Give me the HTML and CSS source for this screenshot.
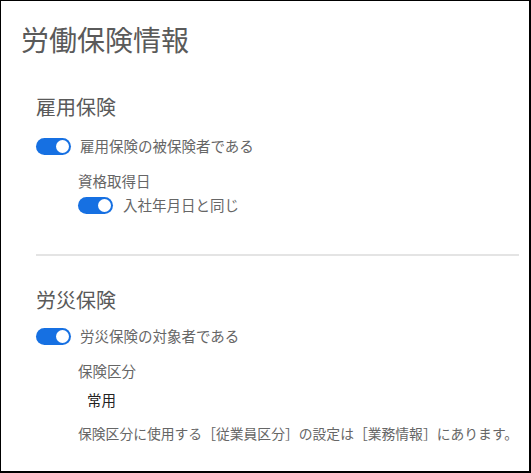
FILE: index.html
```html
<!DOCTYPE html>
<html lang="ja">
<head>
<meta charset="utf-8">
<link rel="stylesheet" href="styles.css">
</head>
<body>
<div class="frame">
  <h1 class="title">労働保険情報</h1>

  <section class="group">
    <h2 class="group-title">雇用保険</h2>
    <div class="toggle-row first">
      <span class="toggle"><span class="knob"></span></span>
      <span class="toggle-label">雇用保険の被保険者である</span>
    </div>
    <div class="sub">
      <div class="field-label">資格取得日</div>
      <div class="toggle-row tight">
        <span class="toggle"><span class="knob"></span></span>
        <span class="toggle-label">入社年月日と同じ</span>
      </div>
    </div>
  </section>

  <div class="divider"></div>

  <section class="group">
    <h2 class="group-title second">労災保険</h2>
    <div class="toggle-row first2">
      <span class="toggle"><span class="knob"></span></span>
      <span class="toggle-label">労災保険の対象者である</span>
    </div>
    <div class="sub">
      <div class="field-label">保険区分</div>
      <div class="value">常用</div>
      <div class="note">保険区分に使用する［従業員区分］の設定は［業務情報］にあります。</div>
    </div>
  </section>
</div>
</body>
</html>
```

FILE: styles.css
```css
html, body {
  margin: 0;
  padding: 0;
  background: #fff;
}

body {
  font-family: "Noto Sans CJK JP", "Noto Sans", sans-serif;
  color: #666;
}

.frame {
  box-sizing: border-box;
  width: 531px;
  height: 473px;
  border: 1px solid #000;
  border-right-width: 2px;
  border-bottom-width: 2px;
  padding-left: 20px;
  overflow: hidden;
}

.title {
  margin: 18px 0 0 0;
  font-size: 28px;
  font-weight: 400;
  line-height: 40px;
  color: #5a5a5a;
}

.group {
  padding-left: 15px;
}

.group-title {
  margin: 34px 0 0 0;
  font-size: 20px;
  font-weight: 400;
  line-height: 28px;
  color: #5a5a5a;
}

.group-title.second {
  margin-top: 30px;
}

.toggle-row {
  display: flex;
  align-items: center;
  gap: 9px;
  height: 24px;
}

.toggle-row.first {
  margin-top: 13px;
}

.toggle-row.first2 {
  margin-top: 10px;
}

.toggle-row.tight {
  margin-top: 1px;
}

.toggle {
  box-sizing: border-box;
  width: 35px;
  height: 17px;
  border-radius: 9px;
  background: #1670e2;
  display: flex;
  justify-content: flex-end;
  align-items: center;
  padding-right: 2px;
}

.knob {
  width: 13px;
  height: 13px;
  border-radius: 50%;
  background: #fff;
}

.toggle-label {
  font-size: 14.5px;
  line-height: 22px;
  color: #666;
}

.sub {
  padding-left: 42px;
}

.field-label {
  margin-top: 12px;
  font-size: 14.5px;
  line-height: 22px;
  color: #666;
}

.tight .toggle-label {
  margin-left: 1px;
}

.value {
  margin-top: 7px;
  padding-left: 9px;
  font-size: 14.5px;
  line-height: 22px;
  color: #222;
  font-weight: 400;
}

.note {
  margin-top: 11px;
  font-size: 13.8px;
  line-height: 22px;
  color: #666;
  white-space: nowrap;
}

.divider {
  margin: 37px 10px 0 15px;
  height: 2px;
  background: #e4e4e4;
}
```
